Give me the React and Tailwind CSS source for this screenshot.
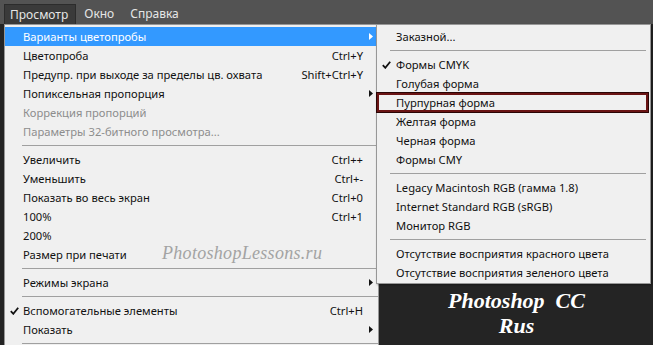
import React from "react"

const mainItems = [
  { label: "Варианты цветопробы", sub: true, active: true },
  { label: "Цветопроба", key: "Ctrl+Y" },
  { label: "Предупр. при выходе за пределы цв. охвата", key: "Shift+Ctrl+Y" },
  { label: "Попиксельная пропорция", sub: true },
  { label: "Коррекция пропорций", disabled: true },
  { label: "Параметры 32-битного просмотра...", disabled: true },
  { sep: true },
  { label: "Увеличить", key: "Ctrl++" },
  { label: "Уменьшить", key: "Ctrl+-" },
  { label: "Показать во весь экран", key: "Ctrl+0" },
  { label: "100%", key: "Ctrl+1" },
  { label: "200%" },
  { label: "Размер при печати" },
  { sep: true },
  { label: "Режимы экрана", sub: true },
  { sep: true },
  { label: "Вспомогательные элементы", key: "Ctrl+H", checked: true },
  { label: "Показать", sub: true },
  { sep: true },
]

const subItems = [
  { label: "Заказной..." },
  { sep: true },
  { label: "Формы CMYK", checked: true },
  { label: "Голубая форма" },
  { label: "Пурпурная форма", boxed: true },
  { label: "Желтая форма" },
  { label: "Черная форма" },
  { label: "Формы CMY" },
  { sep: true },
  { label: "Legacy Macintosh RGB (гамма 1.8)" },
  { label: "Internet Standard RGB (sRGB)" },
  { label: "Монитор RGB" },
  { sep: true },
  { label: "Отсутствие восприятия красного цвета" },
  { label: "Отсутствие восприятия зеленого цвета" },
]

function Check({ white }) {
  return (
    <svg width="9" height="8" viewBox="0 0 9 8" className="shrink-0">
      <path d="M0.8 4.2 L3.3 6.8 L8.2 0.8" fill="none" stroke={white ? "#fff" : "#111"} strokeWidth="1.8" />
    </svg>
  )
}

function Arrow({ white }) {
  return (
    <svg width="4" height="7" viewBox="0 0 4 7">
      <path d="M0 0 L4 3.5 L0 7 Z" fill={white ? "#fff" : "#111"} />
    </svg>
  )
}

function MainMenu() {
  return (
    <div className="absolute left-[4px] top-[24px] w-[375px] h-[330px] bg-[#f0f0f0] border border-[#979797] pt-[2px]">
      {mainItems.map((it, i) =>
        it.sep ? (
          <div key={i} className="h-[9px] flex items-center pl-[17px]">
            <div className="h-px w-full bg-[#a0a0a0]" />
          </div>
        ) : (
          <div
            key={i}
            className={`h-[19px] flex items-center ${
              it.active ? "bg-[#3399ff] text-white" : it.disabled ? "text-[#8d8d8d]" : "text-[#111]"
            }`}
          >
            <div className="w-[18px] flex justify-center pl-[1px]">{it.checked && <Check />}</div>
            <div className="flex-1 whitespace-nowrap">{it.label}</div>
            <div className="pr-[6px] whitespace-nowrap">{it.key}</div>
            <div className="w-[9px] flex items-center">{it.sub && <Arrow white={it.active} />}</div>
          </div>
        )
      )}
    </div>
  )
}

function SubMenu() {
  return (
    <div className="absolute left-[376px] top-[24px] w-[275px] bg-[#f0f0f0] border border-[#979797] pt-[2px] pb-[1px] shadow-[1px_1px_2px_rgba(0,0,0,0.35)]">
      {subItems.map((it, i) =>
        it.sep ? (
          <div key={i} className="h-[9px] flex items-center pl-[13px] pr-[4px]">
            <div className="h-px w-full bg-[#a0a0a0]" />
          </div>
        ) : (
          <div
            key={i}
            className={`h-[19px] flex items-center text-[#111] ${
              it.boxed ? "border-2 border-[#6a1414] outline outline-1 outline-[#2a0505] mr-[2px]" : ""
            }`}
          >
            <div className={`flex justify-center ${it.boxed ? "w-[17px]" : "w-[19px]"}`}>{it.checked && <Check />}</div>
            <div className="whitespace-nowrap">{it.label}</div>
          </div>
        )
      )}
    </div>
  )
}

export default function App() {
  return (
    <div className="relative w-[653px] h-[345px] overflow-hidden bg-[#242424] text-[11.2px] leading-none" style={{ fontFamily: '"Noto Sans", "DejaVu Sans", sans-serif' }}>
      <div className="h-[24px] bg-[#535353] flex items-end pl-[4px] text-[12px] text-[#e6e6e6]">
        <div className="h-[20px] pl-[5px] pr-[7px] flex items-center bg-[#3a3a3a] border border-b-0 border-[#2c2c2c]">Просмотр</div>
        <div className="h-[20px] px-[8px] flex items-center">Окно</div>
        <div className="h-[20px] px-[8px] flex items-center">Справка</div>
      </div>

      <MainMenu />
      <SubMenu />

      <div
        className="absolute left-[162px] top-[244px] text-[18px] italic text-[#a3a3a3] tracking-[0.3px]"
        style={{ fontFamily: '"Liberation Serif", serif' }}
      >
        PhotoshopLessons.ru
      </div>

      <div
        className="absolute left-[380px] top-[288px] w-[273px] flex flex-col items-center text-white italic font-bold text-[22px] leading-[25px]"
        style={{ fontFamily: '"Liberation Serif", serif' }}
      >
        <div>Photoshop&nbsp;&nbsp;CC</div>
        <div>Rus</div>
      </div>
    </div>
  )
}
